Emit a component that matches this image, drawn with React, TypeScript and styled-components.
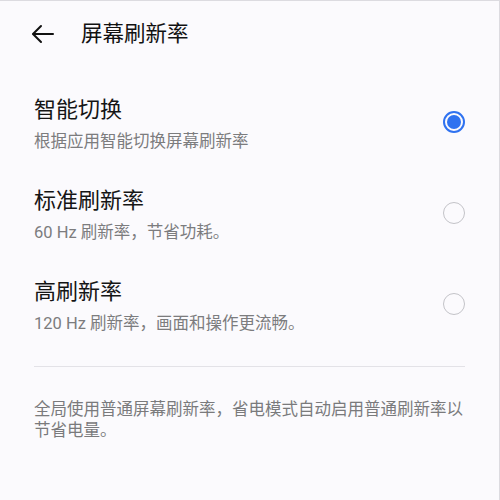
import React from "react";
import styled, { createGlobalStyle } from "styled-components";

const Global = createGlobalStyle`
  html, body { margin: 0; padding: 0; background: #fbfafd; }
  body { font-family: Roboto, "Noto Sans CJK SC", "Noto Sans", sans-serif; }
`;

const Page = styled.div`
  width: 500px;
  height: 500px;
  box-sizing: border-box;
  background: #fbfafd;
  border-top: 1px solid #dcdbe0;
  border-right: 1px solid #dcdbe0;
  overflow: hidden;
`;

const Header = styled.div`
  height: 65px;
  display: flex;
  align-items: center;
  padding-left: 31px;
  gap: 26px;
`;

const HeaderTitle = styled.div`
  font-size: 21.5px;
  color: #111;
  line-height: 30px;
`;

const List = styled.div`
  padding: 10px 34px 0 34px;
`;

const Row = styled.div`
  height: 91px;
  display: flex;
  align-items: flex-start;
  justify-content: space-between;
`;

const Texts = styled.div`
  display: flex;
  flex-direction: column;
  padding-top: 19px;
`;

const Title = styled.div`
  font-size: 22px;
  line-height: 30px;
  color: #151515;
`;

const Sub = styled.div`
  font-size: 16.5px;
  line-height: 24px;
  color: #7c7c7e;
  margin-top: 5px;
`;

const Radio = styled.div<{ $checked?: boolean }>`
  width: 22px;
  height: 22px;
  box-sizing: border-box;
  border-radius: 50%;
  margin-top: 35px;
  border: ${(p) => (p.$checked ? "2px solid #2f72f0" : "1.6px solid #c3c3c8")};
  display: flex;
  align-items: center;
  justify-content: center;
  &::after {
    content: "";
    display: ${(p) => (p.$checked ? "block" : "none")};
    width: 14px;
    height: 14px;
    border-radius: 50%;
    background: #2f72f0;
  }
`;

const Divider = styled.div`
  height: 1px;
  background: #e3e2e7;
  margin: 17px 34px 0 34px;
`;

const Footer = styled.div`
  margin: 32px 34px 0 34px;
  font-size: 16.5px;
  line-height: 21px;
  color: #7a7a7c;
`;

const BackIcon = () => (
  <svg width="24" height="24" viewBox="0 0 24 24" fill="none" stroke="#111" strokeWidth="2" strokeLinecap="round" strokeLinejoin="round">
    <path d="M22 12H2.5" />
    <path d="M10 4L2 12l8 8" />
  </svg>
);

const options = [
  { title: "智能切换", sub: "根据应用智能切换屏幕刷新率", checked: true },
  { title: "标准刷新率", sub: "60 Hz 刷新率，节省功耗。", checked: false },
  { title: "高刷新率", sub: "120 Hz 刷新率，画面和操作更流畅。", checked: false },
];

export default function App() {
  return (
    <Page>
      <Global />
      <Header>
        <BackIcon />
        <HeaderTitle>屏幕刷新率</HeaderTitle>
      </Header>
      <List>
        {options.map((o) => (
          <Row key={o.title}>
            <Texts>
              <Title>{o.title}</Title>
              <Sub>{o.sub}</Sub>
            </Texts>
            <Radio $checked={o.checked} />
          </Row>
        ))}
      </List>
      <Divider />
      <Footer>全局使用普通屏幕刷新率，省电模式自动启用普通刷新率以节省电量。</Footer>
    </Page>
  );
}
